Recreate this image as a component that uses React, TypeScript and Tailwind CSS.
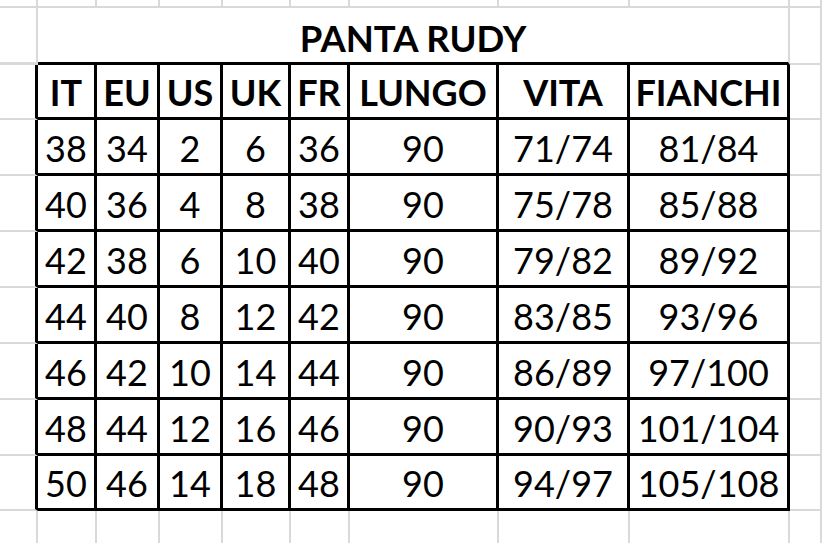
import React from "react";

const headers = ["IT", "EU", "US", "UK", "FR", "LUNGO", "VITA", "FIANCHI"];

const rows: string[][] = [
  ["38", "34", "2", "6", "36", "90", "71/74", "81/84"],
  ["40", "36", "4", "8", "38", "90", "75/78", "85/88"],
  ["42", "38", "6", "10", "40", "90", "79/82", "89/92"],
  ["44", "40", "8", "12", "42", "90", "83/85", "93/96"],
  ["46", "42", "10", "14", "44", "90", "86/89", "97/100"],
  ["48", "44", "12", "16", "46", "90", "90/93", "101/104"],
  ["50", "46", "14", "18", "48", "90", "94/97", "105/108"],
];

const grayCell = "border-r-2 border-b-2 border-[#d9d9d9]";
const tableCell =
  "flex items-end justify-center border-r-[3px] border-b-[3px] border-black pb-[7px] leading-none";

function SheetRow({ children }: { children: React.ReactNode }) {
  return <>{children}</>;
}

export default function App() {
  return (
    <div
      className="h-[543px] w-[822px] overflow-hidden bg-white text-black"
      style={{ fontFamily: "Lato, 'Open Sans', sans-serif" }}
    >
      <div className="grid grid-cols-[38px_59px_63px_63px_68px_59px_149px_131px_160px_32px] grid-rows-[8px_57px_55px_56px_56px_56px_56px_56px_56px_55px_40px]">
        {/* top partial row */}
        <SheetRow>
          {Array.from({ length: 10 }).map((_, i) => (
            <div key={`top-${i}`} className={grayCell} />
          ))}
        </SheetRow>

        {/* title row, merged across the table */}
        <SheetRow>
          <div className="border-r-2 border-b-[3px] border-r-[#d9d9d9] border-b-[#d9d9d9]" />
          <div className="col-span-8 flex items-end justify-center border-r-2 border-b-[3px] border-r-[#d9d9d9] border-b-black pb-[6px] text-[36.5px] font-bold leading-none">
            PANTA RUDY
          </div>
          <div className={grayCell} />
        </SheetRow>

        {/* header row */}
        <SheetRow>
          <div className="border-r-[3px] border-b-2 border-r-black border-b-[#d9d9d9]" />
          {headers.map((h) => (
            <div key={h} className={`${tableCell} text-[36px] font-bold`}>
              {h}
            </div>
          ))}
          <div className={grayCell} />
        </SheetRow>

        {/* data rows */}
        {rows.map((r, ri) => (
          <SheetRow key={ri}>
            <div className="border-r-[3px] border-b-2 border-r-black border-b-[#d9d9d9]" />
            {r.map((v, ci) => (
              <div key={ci} className={`${tableCell} text-[36px]`}>
                {v}
              </div>
            ))}
            <div className={grayCell} />
          </SheetRow>
        ))}

        {/* bottom partial row */}
        <SheetRow>
          {Array.from({ length: 10 }).map((_, i) => (
            <div key={`bottom-${i}`} className={grayCell} />
          ))}
        </SheetRow>
      </div>
    </div>
  );
}
